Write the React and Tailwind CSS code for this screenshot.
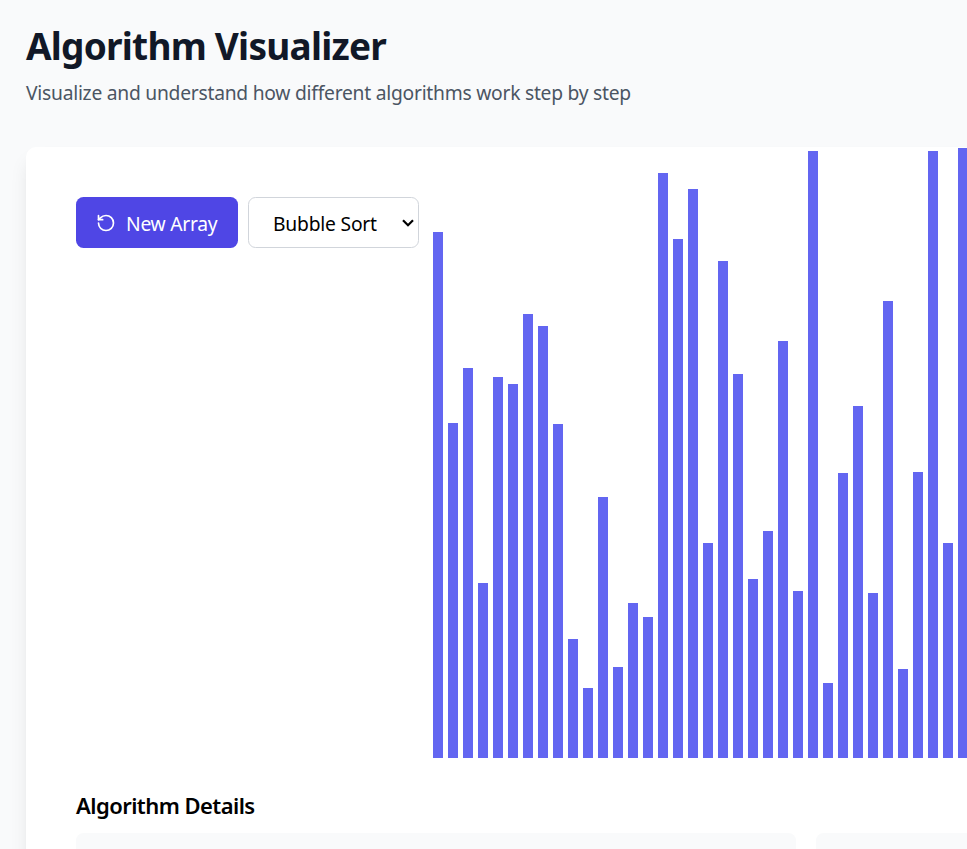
import { RotateCcw } from "lucide-react";

const values = [
  526, 335, 390, 175, 381, 374, 444, 432, 334, 119, 70, 261, 91, 155, 141, 585,
  519, 569, 215, 497, 384, 179, 227, 417, 167, 607, 75, 285, 352, 165, 457, 89,
  286, 607, 215, 610,
];

function Controls() {
  return (
    <div className="flex shrink-0 items-start gap-2.5">
      <button className="flex h-[51px] w-[162px] items-center gap-2.5 whitespace-nowrap rounded-[7.5px] bg-[#4f46e5] pl-5 text-[19.25px] text-white">
        <RotateCcw size={20} className="shrink-0" />
        <span className="pt-[3px] tracking-[-0.25px]">New Array</span>
      </button>
      <button className="flex h-[51px] w-[171px] items-center justify-between whitespace-nowrap rounded-[7.5px] border border-[#d1d5db] bg-white pl-6 pr-1 text-[19.25px] text-black">
        <span className="pt-[3px] tracking-[-0.2px]">Bubble Sort</span>
        <svg width="12" height="8" viewBox="0 0 12 8" fill="none" stroke="black" strokeWidth="2.2">
          <path d="M1 1.2 6 6.2 11 1.2" />
        </svg>
      </button>
    </div>
  );
}

function Chart() {
  return (
    <div className="flex h-full items-end gap-[5px]">
      {values.map((value, i) => (
        <div key={i} className="w-2.5 shrink-0 bg-[#6366f1]" style={{ height: value }} />
      ))}
    </div>
  );
}

export default function App() {
  return (
    <div className="h-[849px] w-full overflow-hidden bg-[#f9fafb] pl-[26px] font-['Noto_Sans','Open_Sans',sans-serif]">
      <header className="h-[147px] whitespace-nowrap pt-[23px]">
        <h1 className="text-[37px] leading-[45px] font-bold tracking-[-0.77px] text-[#111827]">Algorithm Visualizer</h1>
        <p className="mt-2.5 text-[19.25px] leading-[30px] tracking-[-0.25px] text-[#4b5563]">
          Visualize and understand how different algorithms work step by step
        </p>
      </header>
      <main className="h-[900px] w-[1560px] rounded-[10px] bg-white px-[50px] pt-[50px] shadow-[0_12.5px_18.75px_-3.75px_rgba(0,0,0,0.1),0_5px_7.5px_-5px_rgba(0,0,0,0.1)]">
        <div className="flex h-[561px] gap-3.5">
          <Controls />
          <Chart />
        </div>
        <h2 className="mt-[30px] whitespace-nowrap text-[22px] leading-[35px] font-semibold tracking-[-0.55px] text-black">
          Algorithm Details
        </h2>
        <div className="mt-2.5 grid grid-cols-2 gap-5">
          <div className="h-40 rounded-[7.5px] bg-[#f9fafb]" />
          <div className="h-40 rounded-[7.5px] bg-[#f9fafb]" />
        </div>
      </main>
    </div>
  );
}
